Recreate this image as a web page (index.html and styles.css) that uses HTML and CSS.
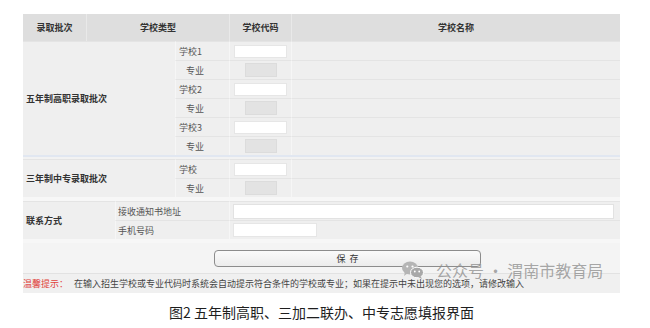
FILE: index.html
```html
<!DOCTYPE html>
<html lang="zh-CN">
<head>
    <meta charset="UTF-8">
    <title>志愿填报</title>
    <link rel="stylesheet" href="styles.css">
</head>
<body>
    <div class="page">
        <div class="form">
            <div class="head">
                <div class="hcell">录取批次</div>
                <div class="hcell">学校类型</div>
                <div class="hcell">学校代码</div>
                <div class="hcell">学校名称</div>
            </div>

            <!-- 五年制 -->
            <div class="grp">
                <div class="batch rows6">五年制高职录取批次</div>
                <div class="lbl">学校1</div><div class="code"><span class="inp"></span></div><div class="name"></div>
                <div class="lbl sub">专业</div><div class="code"><span class="inp grey"></span></div><div class="name"></div>
                <div class="lbl">学校2</div><div class="code"><span class="inp"></span></div><div class="name"></div>
                <div class="lbl sub">专业</div><div class="code"><span class="inp grey"></span></div><div class="name"></div>
                <div class="lbl">学校3</div><div class="code"><span class="inp"></span></div><div class="name"></div>
                <div class="lbl sub">专业</div><div class="code"><span class="inp grey"></span></div><div class="name"></div>
            </div>
            <div class="sep blue"></div>

            <!-- 三年制 -->
            <div class="grp">
                <div class="batch rows2">三年制中专录取批次</div>
                <div class="lbl">学校</div><div class="code"><span class="inp"></span></div><div class="name"></div>
                <div class="lbl sub">专业</div><div class="code"><span class="inp grey"></span></div><div class="name"></div>
            </div>
            <div class="sep"></div>

            <!-- 联系方式 -->
            <div class="contact">
                <div class="batch rows2">联系方式</div>
                <div class="clbl">接收通知书地址</div><div class="cval"><span class="inp addr"></span></div>
                <div class="clbl">手机号码</div><div class="cval"><span class="inp phone"></span></div>
            </div>
            <div class="sep"></div>

            <div class="save-row">
                <button class="save">保&nbsp;&nbsp;存</button>
            </div>
            <div class="tip">
                <span class="warn">温馨提示：</span>在输入招生学校或专业代码时系统会自动提示符合条件的学校或专业；如果在提示中未出现您的选项，请修改输入
            </div>
        </div>
        <p class="caption">图2 五年制高职、三加二联办、中专志愿填报界面</p>
    </div>

    <div class="watermark">
        <svg width="22" height="18" viewBox="0 0 22 18">
            <ellipse cx="8" cy="7" rx="8" ry="6.5" fill="#b5b5b5"/>
            <path d="M3 11 L2 15 L6 12 Z" fill="#b5b5b5"/>
            <circle cx="5.3" cy="5.5" r="1.1" fill="#fff"/>
            <circle cx="10.5" cy="5.5" r="1.1" fill="#fff"/>
            <ellipse cx="15" cy="11.5" rx="6.5" ry="5.3" fill="#a8a8a8" stroke="#fff" stroke-width="1"/>
            <path d="M18.5 15 L20 18 L16 16 Z" fill="#a8a8a8"/>
            <circle cx="12.8" cy="10.5" r="0.9" fill="#fff"/>
            <circle cx="17.2" cy="10.5" r="0.9" fill="#fff"/>
        </svg>
        <span>公众号 · 渭南市教育局</span>
    </div>
</body>
</html>
```

FILE: styles.css
```css
body {
    margin: 0;
    background: #fff;
    font-family: "Noto Sans CJK SC", "Noto Sans", sans-serif;
    color: #555;
}
.page {
    width: 597px;
    margin-left: 23px;
    padding-top: 14px;
}
.form {
    font-size: 9px;
}
.head {
    display: grid;
    grid-template-columns: 63px 143px 62px 1fr;
    height: 27px;
    background-color: #dedede;
}
.hcell {
    display: flex;
    align-items: center;
    justify-content: center;
    color: #333;
    font-weight: bold;
    border-left: 1px solid #e9e9e9;
}
.hcell:first-child {
    border-left: none;
}

.grp {
    display: grid;
    grid-template-columns: 152px 54px 62px 1fr;
    grid-auto-rows: 19px;
    background-color: #efefef;
}
.grp > div {
    border-top: 1px solid #e4e4e4;
    border-left: 1px solid #f6f6f6;
    display: flex;
    align-items: center;
}
.grp > .batch {
    border-left: none;
}
.batch {
    padding-left: 3px;
    color: #333;
    font-weight: bold;
    display: flex;
    align-items: center;
}
.rows6 {
    grid-row: span 6;
}
.rows2 {
    grid-row: span 2;
}
.lbl {
    padding-left: 3px;
}
.lbl.sub {
    padding-left: 10px;
}
.code {
    justify-content: center;
}
.inp {
    display: block;
    width: 51px;
    height: 11px;
    background: #fff;
    border: 1px solid #e6e6e6;
}
.inp.grey {
    width: 30px;
    height: 12px;
    background: #e3e3e3;
    border-color: #dcdcdc;
}

.sep {
    height: 4px;
    background: #f7f7f7;
}
.sep.blue {
    border-top: 2px solid #e1e7f1;
    height: 2px;
    background: #f2f2f2;
}
.sep:last-of-type {
    height: 5px;
}

.contact {
    display: grid;
    grid-template-columns: 92px 114px 1fr;
    grid-auto-rows: 19px;
    background-color: #efefef;
}
.contact > div {
    border-top: 1px solid #e4e4e4;
    display: flex;
    align-items: center;
}
.clbl {
    padding-left: 2px;
    border-left: 1px solid #f6f6f6;
}
.cval {
    padding-left: 3px;
    border-left: 1px solid #f6f6f6;
}
.inp.addr {
    width: 379px;
    height: 13px;
    border-color: #e2e2e2;
}
.inp.phone {
    width: 82px;
    height: 12px;
}

.save-row {
    height: 30px;
    background: #f4f4f4;
    display: flex;
    align-items: center;
    padding-left: 191px;
}
.save {
    width: 267px;
    height: 17px;
    margin-top: 1px;
    padding: 0;
    font-family: inherit;
    font-size: 9px;
    color: #333;
    background: linear-gradient(#fafafa, #ececec);
    border: 1px solid #8c8c8c;
    border-radius: 4px;
}
.tip {
    height: 19px;
    line-height: 19px;
    background: #f0f0f0;
    border-top: 1px solid #e2e2e2;
    color: #444;
    padding-left: 0;
}
.warn {
    color: #e0413b;
    margin-right: 6px;
}

.caption {
    margin: 9px 0 0;
    text-align: center;
    font-size: 14px;
    color: #1e1e1e;
}

.watermark {
    position: absolute;
    left: 402px;
    top: 258px;
    display: flex;
    align-items: center;
    gap: 12px;
    color: rgba(140, 140, 140, 0.75);
    font-size: 16px;
}
```
